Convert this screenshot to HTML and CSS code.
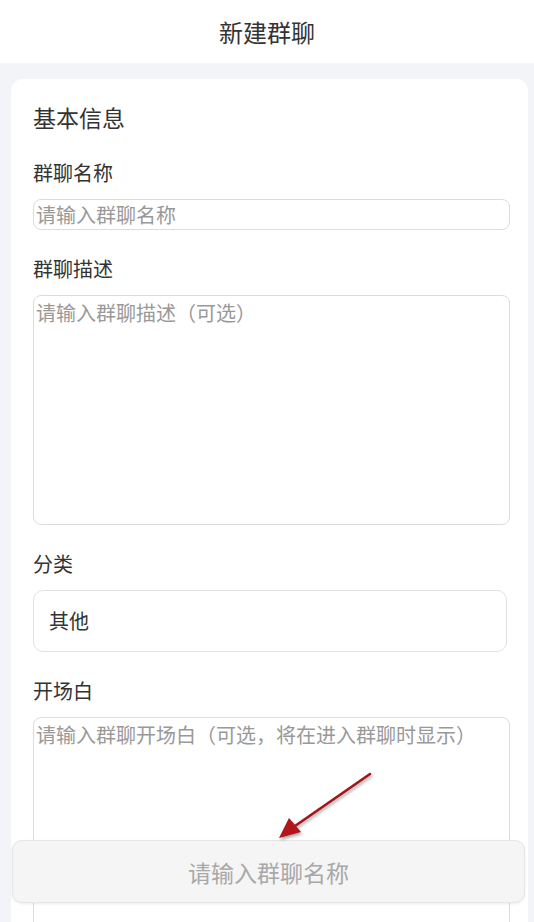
FILE: index.html
```html
<!DOCTYPE html>
<html lang="zh-CN">
  <head>
    <meta charset="UTF-8" />
    <meta name="viewport" content="width=device-width, initial-scale=1.0" />
    <title>新建群聊</title>
    <link rel="stylesheet" href="styles.css">
  </head>
  <body>
    <header class="topbar">新建群聊</header>

    <main class="page">
      <section class="card">
        <h2 class="card-title">基本信息</h2>

        <label class="field">
          <span class="field-label">群聊名称</span>
          <input class="text-input" type="text" placeholder="请输入群聊名称" />
        </label>

        <label class="field">
          <span class="field-label">群聊描述</span>
          <textarea class="text-area desc" placeholder="请输入群聊描述（可选）"></textarea>
        </label>

        <div class="field">
          <span class="field-label">分类</span>
          <div class="select-box">其他</div>
        </div>

        <label class="field">
          <span class="field-label">开场白</span>
          <textarea class="text-area greeting" placeholder="请输入群聊开场白（可选，将在进入群聊时显示）"></textarea>
        </label>
      </section>
    </main>

    
    <div class="submit-bar">
      <button class="submit-btn" type="button" disabled>请输入群聊名称</button>
    </div>

    <!-- annotation arrow -->
    <svg class="annot-arrow" width="110" height="80" viewBox="0 0 110 80">
      <defs>
        <filter id="sh" x="-20%" y="-20%" width="140%" height="140%">
          <feDropShadow dx="1" dy="2" stdDeviation="1.5" flood-color="#000" flood-opacity="0.35" />
        </filter>
      </defs>
      <g filter="url(#sh)">
        <line x1="99" y1="4" x2="24" y2="56" stroke="#a3121a" stroke-width="2.6" stroke-linecap="round" />
        <polygon points="8,68 18,48 30,62" fill="#b0141c" />
      </g>
    </svg>
  </body>
</html>
```

FILE: styles.css
```css
/* base */
* {
  box-sizing: border-box;
}

body {
  margin: 0;
  background-color: #f3f4f8;
  font-family: "Noto Sans CJK SC", "Noto Sans", sans-serif;
  color: #333;
  overflow: hidden;
  height: 922px;
}

/* header */
.topbar {
  height: 63px;
  background-color: #fff;
  text-align: center;
  font-size: 24px;
  line-height: 63px;
  color: #333;
}

.page {
  padding: 16px 6px 0 11px;
}

/* form card */
.card {
  background-color: #fff;
  border-radius: 12px;
  padding: 20px 18px 40px 22px;
}

.card-title {
  margin: 0 0 24px;
  font-size: 23px;
  font-weight: normal;
  line-height: 36px;
  color: #333;
}

.field {
  display: flex;
  flex-direction: column;
  margin-bottom: 25px;
}

.field-label {
  font-size: 20px;
  line-height: 28px;
  margin-bottom: 12px;
  color: #333;
}

.text-input,
.text-area {
  width: 100%;
  border: 1px solid #dcdcdc;
  border-radius: 8px;
  font-family: inherit;
  font-size: 20px;
  color: #333;
  background: #fff;
  outline: none;
  padding: 0 2px;
}

.text-input {
  height: 31px;
  line-height: 29px;
}

.text-area {
  resize: none;
  padding-top: 2px;
  line-height: 30px;
}

.text-input::placeholder,
.text-area::placeholder {
  color: #999;
}

.text-area.desc {
  height: 230px;
}

.text-area.greeting {
  height: 240px;
}

.select-box {
  width: 474px;
  height: 62px;
  border: 1px solid #e2e2e2;
  border-radius: 10px;
  padding-left: 15px;
  font-size: 20px;
  line-height: 60px;
  color: #333;
}

/* bottom bar */
.submit-bar {
  position: absolute;
  left: 12px;
  top: 840px;
  width: 513px;
}

.submit-btn {
  width: 100%;
  height: 63px;
  border: 1px solid #e6e6e6;
  border-radius: 10px;
  background-color: #f5f5f5;
  box-shadow: 0 1px 3px rgba(0, 0, 0, 0.08);
  font-family: inherit;
  font-size: 23px;
  color: #a8a8a8;
}

.annot-arrow {
  position: absolute;
  left: 271px;
  top: 770px;
}
```
